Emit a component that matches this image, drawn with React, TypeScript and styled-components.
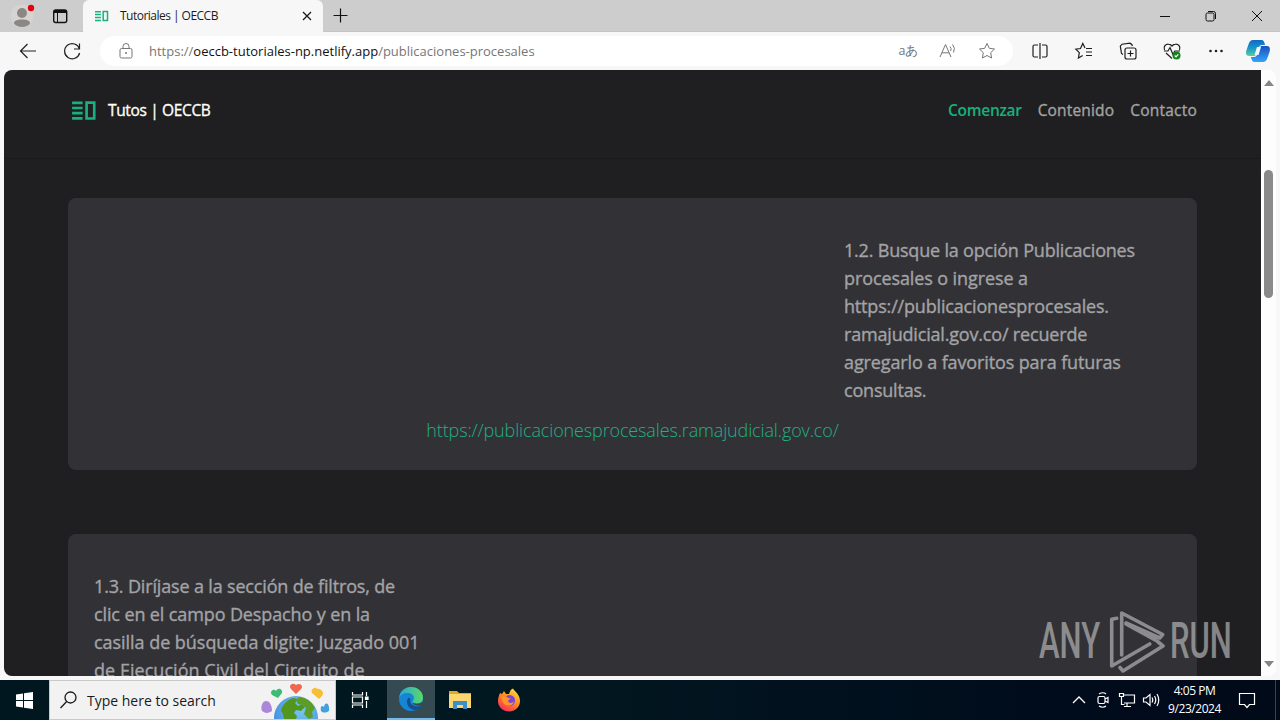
import React from 'react';
import styled, {createGlobalStyle} from 'styled-components';

const GlobalStyle = createGlobalStyle`
  * {
    box-sizing: border-box;
  }

  body {
    margin: 0;
    overflow: hidden;
    font-family: 'Open Sans', 'Noto Sans', sans-serif;
  }
`;

interface TextProps {
  $size?: number;
  $track?: number;
  $color?: string;
  $weight?: number;
}

const Text = styled.span<TextProps>`
  display: block;
  white-space: pre;
  font-size: ${({$size}) => $size || 12}px;
  letter-spacing: ${({$track}) => $track || 0}px;
  color: ${({$color}) => $color || 'inherit'};
  font-weight: ${({$weight}) => $weight || 400};
  -webkit-text-stroke: ${({$weight}) => ($weight === 500 ? 0.35 : 0)}px currentColor;
`;

const Desktop = styled.div`
  width: 1280px;
  height: 720px;
  display: flex;
  flex-direction: column;
  overflow: hidden;
  background: #f7f7f7;
`;

/* tab strip */
const TabStrip = styled.header`
  display: flex;
  height: 32px;
  background: #cdcdcd;
  border-bottom: 1px solid #c4c4c4;
`;

const ProfileArea = styled.div`
  display: flex;
  align-items: center;
  width: 83px;
  height: 32px;
  border-bottom-right-radius: 5px;
  background: #cdcdcd;
`;

const Tab = styled.div`
  display: flex;
  align-items: center;
  width: 240px;
  height: 32px;
  padding: 0 9px 0 12px;
  background: #f7f7f7;
  border-radius: 6px 6px 0 0;
`;

const TabTitle = styled(Text)`
  flex: 1;
  margin-left: 11px;
  padding-bottom: 1px;
`;

const StripFill = styled.div`
  flex: 1;
`;

const WindowButtons = styled.div`
  display: flex;
  width: 138px;
`;

const WindowButton = styled.div`
  display: flex;
  align-items: center;
  justify-content: center;
  width: 46px;
  height: 32px;
`;

/* toolbar */
const Toolbar = styled.div`
  display: flex;
  align-items: center;
  height: 38px;
  padding-left: 16px;
  background: #f7f7f7;
`;

const Icon = styled.svg`
  display: block;
  flex: none;
  fill: none;
  stroke: ${({stroke}) => stroke || 'currentColor'};
`;

const NavButtons = styled.div`
  display: flex;
  gap: 20px;
  width: 84px;
`;

const AddressBar = styled.div`
  display: flex;
  align-items: center;
  width: 913px;
  height: 30px;
  padding: 0 16px 0 14px;
  border-radius: 15px;
  background: #fff;
  color: #767676;
`;

const Url = styled.div`
  display: flex;
  flex: 1;
  margin-left: 11px;
`;

const AddressActions = styled.div`
  display: flex;
  align-items: center;
  gap: 17px;
`;

const ToolbarActions = styled.div`
  display: flex;
  align-items: center;
  gap: 20px;
  margin-left: 15px;
  color: #1f1f1f;
`;

const CopilotIcon = styled(Icon)`
  margin-left: -3px;
`;

/* page */
const Viewport = styled.div`
  display: flex;
  height: 606px;
  margin: 0 4px;
  border-radius: 8px;
  background: #fdfdfd;
  overflow: hidden;
`;

const Page = styled.main`
  width: 1257px;
  height: 606px;
  background: #1f1f22;
  overflow: hidden;
`;

const PageHeader = styled.div`
  display: flex;
  align-items: center;
  justify-content: space-between;
  height: 89px;
  padding: 0 64px 8px 68px;
  border-bottom: 1px solid #19191b;
`;

const Brand = styled.div`
  display: flex;
  align-items: center;
  gap: 11px;
`;

const Menu = styled.nav`
  display: flex;
  gap: 16px;
`;

const Cards = styled.div`
  display: flex;
  flex-direction: column;
  gap: 64px;
  padding: 39px 64px 0;
`;

const Card = styled.section`
  height: 272px;
  padding: 38px 26px;
  border-radius: 8px;
  background: #323236;
`;

const Paragraph = styled.div<{$offset?: number}>`
  display: flex;
  flex-direction: column;
  margin-left: ${({$offset}) => $offset || 0}px;
  line-height: 28px;
`;

const CardLink = styled.div`
  display: flex;
  justify-content: center;
  margin-top: 12px;
  line-height: 28px;
`;

const Scrollbar = styled.div`
  display: flex;
  flex-direction: column;
  align-items: center;
  justify-content: space-between;
  width: 15px;
  padding: 10px 0 9px;
`;

const Thumb = styled.div`
  width: 9px;
  height: 128px;
  margin: 84px 0 auto;
  border-radius: 5px;
  background: #8a8a8a;
`;

const Watermark = styled.div`
  position: absolute;
  left: 1039px;
  top: 608px;
  display: flex;
  align-items: center;
  opacity: 0.62;
  color: #c4c4c6;
`;

const WatermarkWord = styled.span<{$width: number; $scale: number}>`
  display: block;
  width: ${({$width}) => $width}px;
  line-height: 67px;
  font-family: 'Roboto', sans-serif;
  font-size: 50px;
  font-weight: 500;
  white-space: nowrap;
  transform: scaleX(${({$scale}) => $scale});
  transform-origin: left;
`;

/* taskbar */
const Taskbar = styled.footer`
  display: flex;
  align-items: center;
  height: 40px;
  margin-top: 4px;
  background: linear-gradient(90deg, #00171f, #021720 45%, #000b1b 85%, #000a19);
  color: #fff;
`;

const TaskButton = styled.div<{$active?: boolean}>`
  display: flex;
  align-items: center;
  justify-content: center;
  width: ${({$active}) => ($active ? 48 : 49)}px;
  height: 40px;
  background: ${({$active}) => ($active ? '#364a51' : 'transparent')};
  border-bottom: ${({$active}) => ($active ? '2px solid #76b9ed' : 'none')};
`;

const TaskViewButton = styled(TaskButton)`
  width: 51px;
  padding-right: 3px;
`;

const SearchBox = styled.div`
  display: flex;
  align-items: center;
  width: 287px;
  height: 40px;
  padding-left: 10px;
  background: #f2f2f2;
  border: 1px solid #c9c9c9;
  color: #1a1a1a;
`;

const SearchText = styled(Text)`
  width: 172px;
  margin-left: 10px;
`;

const Tray = styled.div`
  display: flex;
  align-items: center;
  margin-left: auto;
  height: 40px;
`;

const TrayIcons = styled.div`
  display: flex;
  align-items: center;
  gap: 6px;
`;

const Clock = styled.div`
  display: flex;
  flex-direction: column;
  align-items: center;
  width: 69px;
  line-height: 18px;
`;

const NotifyArea = styled.div`
  display: flex;
  align-items: center;
  justify-content: center;
  width: 47px;
  height: 40px;
  margin-right: 4px;
  padding-right: 10px;
  border-right: 1px solid #39424d;
`;

const stepTwo = [
  {text: '1.2. Busque la opción Publicaciones', track: -0.2},
  {text: 'procesales o ingrese a', track: -0.1},
  {text: 'https://publicacionesprocesales.', track: -0.17},
  {text: 'ramajudicial.gov.co/ recuerde', track: -0.18},
  {text: 'agregarlo a favoritos para futuras', track: -0.12},
  {text: 'consultas.', track: -0.2},
];

const stepThree = [
  {text: '1.3. Diríjase a la sección de filtros, de', track: -0.16},
  {text: 'clic en el campo Despacho y en la', track: -0.12},
  {text: 'casilla de búsqueda digite: Juzgado 001', track: -0.04},
  {text: 'de Ejecución Civil del Circuito de', track: 0.04},
];

const Logo = ({width, height}: {width: number; height: number}) => (
  <Icon width={width} height={height} viewBox="0 0 26 22" stroke="#18b17d" strokeWidth="2.8">
    <path d="M0 3h11M0 8.4h11M0 13.8h11M0 19.2h11M15.2 2.8h8v16.6h-8z" />
  </Icon>
);

const starPath = 'M10 2.5l2.3 4.8 5.2.7-3.8 3.7.9 5.3-4.6-2.5L5.4 17l.9-5.3L2.5 8l5.2-.7z';

const App: React.FunctionComponent = () => {
  return (
    <>
      <GlobalStyle />
      <Desktop>
        <TabStrip>
          <ProfileArea>
            <Icon width="83" height="32" viewBox="0 0 83 32" stroke="none">
              <circle cx="22" cy="16" r="11.5" fill="#d6d3d1" />
              <circle cx="22" cy="13" r="5" fill="#8b8784" />
              <path d="M14 23.5c0-3 3-4 8-4s8 1 8 4c-1.500 2.300-4.500 3.500-8 3.500s-6.500-1.200-8-3.500z" fill="#8b8784" />
              <circle cx="31" cy="8" r="3.200" fill="#e3000f" />
              <rect x="53.700" y="10" width="13" height="12.500" rx="2" stroke="#111" strokeWidth="1.400" />
              <path d="M54 10h12.500v3H54z" fill="#111" />
              <path d="M57.500 12v10" stroke="#111" />
            </Icon>
          </ProfileArea>
          <Tab>
            <Logo width={14} height={12} />
            <TabTitle $size={12} $track={-0.52} $color="#1b1b1b">Tutoriales | OECCB</TabTitle>
            <Icon width="14" height="14" viewBox="0 0 14 14" stroke="#1b1b1b" strokeWidth="1.300">
              <path d="M3 3l8 8M11 3l-8 8" />
            </Icon>
          </Tab>
          <WindowButton>
            <Icon width="46" height="32" viewBox="0 0 46 32" stroke="#111" strokeWidth="1.200">
              <path d="M10.500 15.500h14M17.500 8.500v14" />
            </Icon>
          </WindowButton>
          <StripFill />
          <WindowButtons>
            <WindowButton>
              <Icon width="12" height="12" viewBox="0 0 12 12" stroke="#111"><path d="M1 6.500h10" /></Icon>
            </WindowButton>
            <WindowButton>
              <Icon width="12" height="12" viewBox="0 0 12 12" stroke="#111">
                <rect x="1" y="3" width="8" height="8" rx="1.500" />
                <path d="M3 1.500h5.500a2 2 0 0 1 2 2V9" />
              </Icon>
            </WindowButton>
            <WindowButton>
              <Icon width="12" height="12" viewBox="0 0 12 12" stroke="#111"><path d="M1 1l10 10M11 1L1 11" /></Icon>
            </WindowButton>
          </WindowButtons>
        </TabStrip>
        <Toolbar>
          <NavButtons>
            <Icon width="24" height="24" viewBox="0 0 24 24" stroke="#222" strokeWidth="1.200">
              <path d="M20 12H4.500M11.500 5l-7 7 7 7" />
            </Icon>
            <Icon width="24" height="24" viewBox="0 0 24 24" stroke="#222" strokeWidth="1.200">
              <path d="M19.500 10a7.600 7.600 0 1 0 .1 4M19.500 4.500V10H14" />
            </Icon>
          </NavButtons>
          <AddressBar>
            <Icon width="24" height="24" viewBox="0 0 24 24">
              <rect x="6" y="9.500" width="12" height="9.500" rx="1.500" />
              <path d="M9 9.500V7.500a3 3 0 0 1 6 0v2" />
              <circle cx="12" cy="14" r="1" fill="currentColor" stroke="none" />
            </Icon>
            <Url>
              <Text $size={13}>https://</Text>
              <Text $size={13} $color="#111">oeccb-tutoriales-np.netlify.app</Text>
              <Text $size={13}>/publicaciones-procesales</Text>
            </Url>
            <AddressActions>
              <Text $size={12.5} $track={-0.9}>aあ </Text>
              <Icon width="24" height="20" viewBox="0 0 24 20">
                <path d="M4 16L9.500 3.500 15 16M6 11.800h7M14 5.500q2 2 .6 4.500M16.500 3.500q3.300 3.500 1 8" />
              </Icon>
              <Icon width="20" height="20" viewBox="0 0 20 20"><path d={starPath} /></Icon>
            </AddressActions>
          </AddressBar>
          <ToolbarActions>
            <Icon width="24" height="24" viewBox="0 0 24 24" strokeWidth="1.200">
              <path d="M10 6H6.500A1.500 1.500 0 0 0 5 7.500v9A1.500 1.500 0 0 0 6.500 18H10M14 6h3.500A1.500 1.500 0 0 1 19 7.500v9a1.500 1.500 0 0 1-1.500 1.500H14M12 4v16" />
            </Icon>
            <Icon width="24" height="24" viewBox="0 0 24 24" strokeWidth="1.200">
              <path d="M13 9l-2.200-4.500L8.500 9.500l-4.700.7 3.500 3.500-.9 5.300 4.300-2.400M14 9.500h6M14 13h6M14 16.500h6" />
            </Icon>
            <Icon width="24" height="24" viewBox="0 0 24 24" strokeWidth="1.200">
              <rect x="9" y="9" width="11" height="11" rx="2" />
              <path d="M14.500 11.500v6M11.500 14.500h6M7 15.500l-1.500-1L4.300 7.200 6 5.200l8-1 2 1.500.3 1.500" />
            </Icon>
            <Icon width="24" height="24" viewBox="0 0 24 24" strokeWidth="1.200">
              <path d="M4.500 11C3 7 6 5 8.500 5.200 10.500 5.300 12 7 12 7s1.500-1.700 3.500-1.800C18 5 21 7 19.500 11M6 14l6 5.500M4 12h4l2-3.500 3 7 1.800-3.500H20" />
              <circle cx="16.500" cy="16.500" r="4" fill="#13831a" stroke="none" />
              <path d="M14.700 16.500l1.300 1.300 2.300-2.500" stroke="#fff" />
            </Icon>
            <Icon width="24" height="24" viewBox="0 0 24 24" stroke="none">
              <g fill="#1f1f1f">
                <circle cx="6.500" cy="12" r="1.300" />
                <circle cx="12" cy="12" r="1.300" />
                <circle cx="17.500" cy="12" r="1.300" />
              </g>
            </Icon>
            <CopilotIcon width="26" height="26" viewBox="0 0 26 26" stroke="none">
              <defs>
                <linearGradient id="copilotA" x1="0" y1="0" x2="0" y2="1">
                  <stop offset="0" stopColor="#1267c7" />
                  <stop offset=".5" stopColor="#1797c9" />
                  <stop offset="1" stopColor="#5ad19b" />
                </linearGradient>
                <linearGradient id="copilotB" x1="0" y1="0" x2="0" y2="1">
                  <stop offset="0" stopColor="#1a4fc4" />
                  <stop offset="1" stopColor="#34a5f5" />
                </linearGradient>
              </defs>
              <path d="M8 2h8.500c2 0 2.500 1.500 3 3l.5 2h-3c-2 0-3 1.500-3.500 3l-2 6c-.5 1.500-1.500 2-3 2H4c-3 0-3.500-3-2.500-6l2.500-7C5 3 6 2 8 2z" fill="url(#copilotA)" />
              <path d="M18 24H9.500c-2 0-2.500-1.500-3-3L6 19h3c2 0 3-1.500 3.500-3l2-6c.5-1.500 1.500-2 3-2H22c3 0 3.500 3 2.500 6L22 21c-1 2-2 3-4 3z" fill="url(#copilotB)" />
              <path d="M12 9h4l-2.500 8h-4z" fill="#f2f9ff" />
            </CopilotIcon>
          </ToolbarActions>
        </Toolbar>
        <Viewport>
          <Page>
            <PageHeader>
              <Brand>
                <Logo width={25} height={21} />
                <Text $size={15.5} $track={-0.35} $color="#fffff5" $weight={500}>Tutos | OECCB</Text>
              </Brand>
              <Menu>
                <Text $size={15.5} $track={-0.3} $color="#18b17d" $weight={600}>Comenzar</Text>
                <Text $size={15.5} $track={0.17} $color="#a3a3a0" $weight={500}>Contenido</Text>
                <Text $size={15.5} $track={0.22} $color="#a3a3a0" $weight={500}>Contacto</Text>
              </Menu>
            </PageHeader>
            <Cards>
              <Card>
                <Paragraph $offset={750}>
                  {stepTwo.map((line) => (
                    <Text key={line.text} $size={18} $track={line.track} $color="#a3a3a6" $weight={500}>{line.text}</Text>
                  ))}
                </Paragraph>
                <CardLink>
                  <Text $size={18} $track={-0.14} $color="#22b083" $weight={300}>https://publicacionesprocesales.ramajudicial.gov.co/</Text>
                </CardLink>
              </Card>
              <Card>
                <Paragraph>
                  {stepThree.map((line) => (
                    <Text key={line.text} $size={18} $track={line.track} $color="#a3a3a6" $weight={500}>{line.text}</Text>
                  ))}
                </Paragraph>
              </Card>
            </Cards>
          </Page>
          <Scrollbar>
            <Icon width="10" height="6" viewBox="0 0 10 6" stroke="none"><path d="M0 6l5-6 5 6z" fill="#858585" /></Icon>
            <Thumb />
            <Icon width="10" height="6" viewBox="0 0 10 6" stroke="none"><path d="M0 0l5 6 5-6z" fill="#858585" /></Icon>
          </Scrollbar>
        </Viewport>
        <Taskbar>
          <TaskButton>
            <Icon width="17" height="17" viewBox="0 0 17 17" stroke="none">
              <path d="M0 2.500l7-1V8H0zM8 1.300L17 0v8H8zM0 9h7v6.500l-7-1zM8 9h9v8l-9-1.300z" fill="#fff" />
            </Icon>
          </TaskButton>
          <SearchBox>
            <Icon width="17" height="18" viewBox="0 0 17 18" strokeWidth="1.300">
              <circle cx="10.500" cy="6.500" r="5.500" />
              <path d="M6.700 10.500L.5 17" />
            </Icon>
            <SearchText $size={14}>Type here to search</SearchText>
            <Icon width="76" height="38" viewBox="259 681 76 38" stroke="none">
              <defs>
                <radialGradient id="sea" cx=".6" cy=".3" r=".8">
                  <stop offset="0" stopColor="#79c8f2" />
                  <stop offset="1" stopColor="#3b82d6" />
                </radialGradient>
              </defs>
              <circle cx="296" cy="718" r="22" fill="url(#sea)" />
              <path d="M281 711c1-6 6-11 12-13l5 1-3 4 3 3 4-2 3 3-4 4-5-1-2 3 3 3-1 3h-12l-1-5z" fill="#52951f" />
              <path d="M299 697c7 0 13 5 16 11l-3 4 1 5-4 2-5-5 2-6-3-3-5-1-2-4z" fill="#5c9e25" />
              <path d="M296 694l-5-5c-3-4 2-7 5-4 4-3 8 1 5 4z" fill="#ef6651" />
              <path d="M278 698l-6-3c-3-4 2-7 4-4 2-4 7-2 6 2z" fill="#3dba74" />
              <path d="M319 699l-7-6c-2-4 4-7 5-4 4-1 8 4 5 7z" fill="#f6bf35" />
              <path d="M262 711c-2-5 1-10 4-10 4 0 6 5 6 10-3 2-6 3-10 0z" fill="#ac86d8" />
              <path d="M321 711c-1-5 1-6 3-4 1-6 6-4 5 4-3 2-6 2-8 0z" fill="#43a0dc" />
            </Icon>
          </SearchBox>
          <TaskViewButton>
            <Icon width="18" height="18" viewBox="0 0 18 18" strokeWidth="1.200">
              <path d="M1.500 1v3h10V1M1.500 17v-3h10v3M1.500 6h10v6h-10zM15.500 1v4M15.500 10v7" />
              <path d="M14.500 6h2.500v2.500h-2.500z" fill="#fff" />
            </Icon>
          </TaskViewButton>
          <TaskButton $active>
            <Icon width="26" height="26" viewBox="0 0 26 26" stroke="none">
              <defs>
                <linearGradient id="edgeTop" x1="0" y1=".5" x2="1" y2=".5">
                  <stop offset="0" stopColor="#2ba7dc" />
                  <stop offset="1" stopColor="#59d964" />
                </linearGradient>
              </defs>
              <circle cx="13" cy="13" r="12" fill="#1685d3" />
              <path d="M1 12C2 5 7 1 13 1c7 0 12 5 12 10.500 0 4-3 6-6 6-3 0-4.500-1-4.500-2s1.500-1.500 1.500-3.500C16 9 13 7 9.500 7 5.500 7 2 9 1 12z" fill="url(#edgeTop)" />
              <path d="M10 12c-3 5 1 12 7 12 3-.5 5-2 7-4.500-5 2.500-13 0-11.500-6 0-1-1.500-2.500-2.500-1.500z" fill="#14508f" />
              <path d="M14.500 15.500c0 2.500 6 3 10 .5l1 3-5 1-5-1.500z" fill="#364a51" />
            </Icon>
          </TaskButton>
          <TaskButton>
            <Icon width="22" height="20" viewBox="0 0 22 20" stroke="none">
              <path d="M0 1h8l2 2h12v15H0z" fill="#e8a524" />
              <path d="M0 4h22v14H0z" fill="#fcd770" />
              <path d="M4 19v-8h14v8h-4v-4H8v4z" fill="#3d8fca" />
            </Icon>
          </TaskButton>
          <TaskButton>
            <Icon width="24" height="24" viewBox="0 0 24 24" stroke="none">
              <defs>
                <linearGradient id="fox" x1=".8" y1="0" x2=".2" y2="1">
                  <stop offset="0" stopColor="#ffe43c" />
                  <stop offset=".45" stopColor="#ff8b20" />
                  <stop offset="1" stopColor="#f5275e" />
                </linearGradient>
              </defs>
              <path d="M3 5l2 1 2-3 2 3h3c1-3 2-5 4-5.500C17 3 23 6 23 13c0 6-5 10.500-11 10.500S1 19 1 13c0-3 1-6 2-8z" fill="url(#fox)" />
              <circle cx="12.500" cy="12.500" r="5.500" fill="#7a44dd" />
              <path d="M4 9c3-2 6-1 7 1l3 .5-3 2c0 3 4 3 6 1-1 5-8 6-11 1z" fill="#ff9425" />
            </Icon>
          </TaskButton>
          <Tray>
            <TrayIcons>
              <Icon width="18" height="18" viewBox="0 0 18 18" strokeWidth="1.300"><path d="M3 12l6-6 6 6" /></Icon>
              <Icon width="18" height="18" viewBox="0 0 18 18" strokeWidth="1.200">
                <rect x="4" y="5.500" width="7" height="7" rx="1.500" />
                <path d="M11 8l3-1.500v5L11 10M5 3q4-2.500 7 0M5 15q4 2.500 7 0" />
              </Icon>
              <Icon width="18" height="18" viewBox="0 0 18 18" strokeWidth="1.200">
                <path d="M6 4h10.500v8H6M9 12v3.500M6 15.500h7M1.500 2.500h4v3h-4zM3.500 5.500v8h3" />
              </Icon>
              <Icon width="18" height="18" viewBox="0 0 18 18" strokeWidth="1.200">
                <path d="M1.500 7h2.500l4-3.500v11L4 11H1.500zM10 6.500q1.500 2.500 0 5M12.500 5q2.500 4 0 8M15 3q3.500 6 0 12" />
              </Icon>
            </TrayIcons>
            <Clock>
              <Text $size={12} $track={-0.45}>4:05 PM</Text>
              <Text $size={12} $track={-0.45}>9/23/2024</Text>
            </Clock>
            <NotifyArea>
              <Icon width="18" height="18" viewBox="0 0 18 18" strokeWidth="1.200">
                <path d="M1.500 2.500h15v11h-5L9 16.500l-2.500-3h-5z" />
              </Icon>
            </NotifyArea>
          </Tray>
        </Taskbar>
        <Watermark>
          <WatermarkWord $width={70} $scale={0.62}>ANY</WatermarkWord>
          <Icon width="61" height="66" viewBox="0 0 61 66" strokeWidth="3.600" strokeLinejoin="round" strokeLinecap="round">
            <path d="M7.700 9.300l-5 1V57l38-22M12.700 46V4l41 21.500-3 3.500L17 14M11 58.500l3 3.500 40-25-6-5-31-17" />
          </Icon>
          <WatermarkWord $width={64} $scale={0.62}>RUN</WatermarkWord>
        </Watermark>
      </Desktop>
    </>
  );
};

export default App;
